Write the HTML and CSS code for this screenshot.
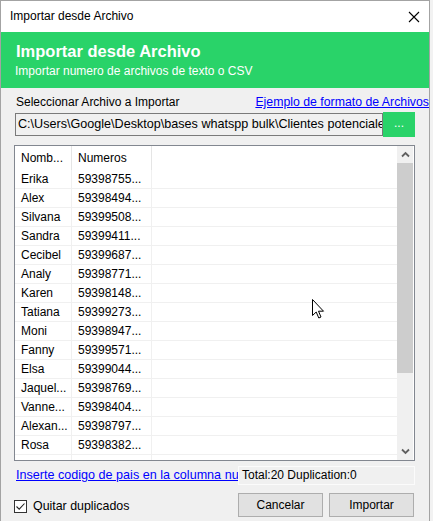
FILE: index.html
```html
<!DOCTYPE html>
<html lang="es">
<head>
<meta charset="utf-8">
<title>Importar desde Archivo</title>
<link rel="stylesheet" href="styles.css">
</head>
<body>
<div class="window">
  <div class="titlebar">
    <span class="title">Importar desde Archivo</span>
    <svg class="close" width="12" height="12" viewBox="0 0 12 12"><path d="M1 1 L11 11 M11 1 L1 11" stroke="#000" stroke-width="1.1" fill="none"/></svg>
  </div>
  <div class="banner">
    <div class="banner-title">Importar desde Archivo</div>
    <div class="banner-sub">Importar numero de archivos de texto o CSV</div>
  </div>
  <div class="content">
    <div class="label-row">
      <span class="label">Seleccionar Archivo a Importar</span>
      <a class="link top-link" href="#">Ejemplo de formato de Archivos</a>
    </div>
    <div class="file-row">
      <div class="path">C:\Users\Google\Desktop\bases whatspp bulk\Clientes potenciales.csv</div>
      <div class="browse">...</div>
    </div>
    <div class="list">
      <div class="grid">
        <div class="hdr">Nomb...</div><div class="hdr">Numeros</div><div class="hdr last"></div>
        <div class="c">Erika</div><div class="c">59398755...</div><div class="c last"></div>
        <div class="c">Alex</div><div class="c">59398494...</div><div class="c last"></div>
        <div class="c">Silvana</div><div class="c">59399508...</div><div class="c last"></div>
        <div class="c">Sandra</div><div class="c">59399411...</div><div class="c last"></div>
        <div class="c">Cecibel</div><div class="c">59399687...</div><div class="c last"></div>
        <div class="c">Analy</div><div class="c">59398771...</div><div class="c last"></div>
        <div class="c">Karen</div><div class="c">59398148...</div><div class="c last"></div>
        <div class="c">Tatiana</div><div class="c">59399273...</div><div class="c last"></div>
        <div class="c">Moni</div><div class="c">59398947...</div><div class="c last"></div>
        <div class="c">Fanny</div><div class="c">59399571...</div><div class="c last"></div>
        <div class="c">Elsa</div><div class="c">59399044...</div><div class="c last"></div>
        <div class="c">Jaquel...</div><div class="c">59398769...</div><div class="c last"></div>
        <div class="c">Vanne...</div><div class="c">59398404...</div><div class="c last"></div>
        <div class="c">Alexan...</div><div class="c">59398797...</div><div class="c last"></div>
        <div class="c">Rosa</div><div class="c">59398382...</div><div class="c last"></div>
        <div class="c"></div><div class="c"></div><div class="c last"></div>
      </div>
      <div class="scrollbar">
        <div class="sb-btn"><svg width="9" height="7" viewBox="0 0 9 7"><path d="M1 5.5 L4.5 2 L8 5.5" stroke="#606060" stroke-width="1.8" fill="none"/></svg></div>
        <div class="sb-thumb"></div>
        <div class="sb-track"></div>
        <div class="sb-btn"><svg width="9" height="7" viewBox="0 0 9 7"><path d="M1 1.5 L4.5 5 L8 1.5" stroke="#606060" stroke-width="1.8" fill="none"/></svg></div>
      </div>
    </div>
    <div class="status-row">
      <a class="link clip" href="#">Inserte codigo de pais en la columna numeros</a>
      <div class="status">Total:20 Duplication:0</div>
    </div>
    <div class="footer">
      <label class="check">
        <span class="box"><svg width="11" height="11" viewBox="0 0 11 11"><path d="M1.5 5.5 L4.2 8.2 L9.5 2.5" stroke="#222" stroke-width="1.1" fill="none"/></svg></span>
        <span class="check-text">Quitar duplicados</span>
      </label>
      <div class="buttons">
        <div class="btn">Cancelar</div>
        <div class="btn">Importar</div>
      </div>
    </div>
  </div>
  <svg class="cursor" width="13" height="21" viewBox="0 0 13 21"><path d="M0.5 0.5 L0.5 16.5 L4.2 13 L6.8 19 L9 18 L6.5 12.2 L11.5 12.2 Z" fill="#fff" stroke="#000" stroke-width="1"/></svg>
</div>
</body>
</html>
```

FILE: styles.css
```css
* { box-sizing: border-box; }
html, body { margin: 0; padding: 0; }
body {
  background: #f2f2f2;
  font-family: "Liberation Sans", Arial, sans-serif;
  font-size: 12px;
  color: #000;
  width: 433px;
  height: 521px;
  overflow: hidden;
}
.window {
  position: relative;
  width: 430px;
  height: 540px;
  border: 1px solid #a3a3a3;
  border-bottom: none;
  background: #f0f0f0;
}
.titlebar {
  height: 31px;
  background: #fff;
  display: flex;
  align-items: center;
  justify-content: space-between;
  padding: 0 9px 0 9px;
}
.title { font-size: 12px; line-height: 31px; }
.close { margin-top: 1px; }
.banner {
  background: #29d369;
  color: #fff;
  height: 56px;
  padding: 10px 0 0 14px;
}
.banner-title {
  font-weight: bold;
  font-size: 16.5px;
  line-height: 18px;
  padding-left: 1px;
}
.banner-sub {
  font-size: 12px;
  line-height: 14px;
  margin-top: 4px;
}
.content {
  padding: 7px 14px 0 13px;
}
.label-row {
  display: flex;
  justify-content: space-between;
  margin-right: -14px;
  height: 14px;
  line-height: 14px;
}
.label { padding-left: 2px; }
.link { color: #0000ff; text-decoration: underline; }
.top-link { font-size: 12.3px; }
.file-row {
  display: flex;
  margin-top: 3px;
  height: 25px;
}
.path {
  margin: 1px 0 0 1px;
  width: 368px;
  height: 23px;
  border: 1px solid #7a7a7a;
  background: #f0f0f0;
  padding: 0 0 0 2px;
  font-size: 12.6px;
  line-height: 21px;
  white-space: nowrap;
  overflow: hidden;
}
.browse {
  width: 32px;
  height: 25px;
  background: #29d369;
  color: #fff;
  text-align: center;
  line-height: 22px;
}
.list {
  margin-top: 8px;
  height: 316px;
  border: 1px solid #828790;
  background: #fff;
  display: flex;
  overflow: hidden;
}
.grid {
  flex: 1;
  display: grid;
  grid-template-columns: 57px 80px 1fr;
  grid-auto-rows: 19px;
  grid-template-rows: 24px;
  align-content: start;
  overflow: hidden;
}
.hdr {
  border-right: 1px solid #e5e5e5;
  padding-left: 6px;
  line-height: 24px;
  white-space: nowrap;
}
.c {
  border-right: 1px solid #f0f0f0;
  border-bottom: 1px solid #f0f0f0;
  padding-left: 6px;
  line-height: 18px;
  white-space: nowrap;
  overflow: hidden;
}
.hdr.last, .c.last { border-right: none; }
.scrollbar {
  width: 16px;
  margin-right: 1px;
  background: #f0f0f0;
  display: flex;
  flex-direction: column;
}
.sb-btn {
  height: 17px;
  display: flex;
  align-items: center;
  justify-content: center;
}
.sb-thumb { height: 210px; background: #cdcdcd; }
.sb-track { flex: 1; }
.status-row {
  display: flex;
  margin-top: 5px;
  height: 19px;
}
.clip {
  width: 222px;
  margin-left: 2px;
  font-size: 12.6px;
  white-space: nowrap;
  overflow: hidden;
  line-height: 19px;
}
.status {
  flex: 1;
  border: 1px solid #fbfbfb;
  padding-left: 3px;
  line-height: 17px;
}
.footer {
  display: flex;
  justify-content: space-between;
  align-items: center;
  margin-top: 8px;
}
.check {
  display: flex;
  align-items: center;
  gap: 6px;
  margin-top: 2px;
}
.check-text { font-size: 12.4px; }
.box {
  width: 13px;
  height: 13px;
  border: 1px solid #333;
  background: #fff;
  display: flex;
  align-items: center;
  justify-content: center;
}
.buttons {
  display: flex;
  gap: 6px;
  margin-right: 1px;
}
.btn {
  width: 85px;
  height: 24px;
  background: #e1e1e1;
  border: 1px solid #adadad;
  text-align: center;
  line-height: 22px;
}
.cursor {
  position: absolute;
  left: 311px;
  top: 298px;
}
```
